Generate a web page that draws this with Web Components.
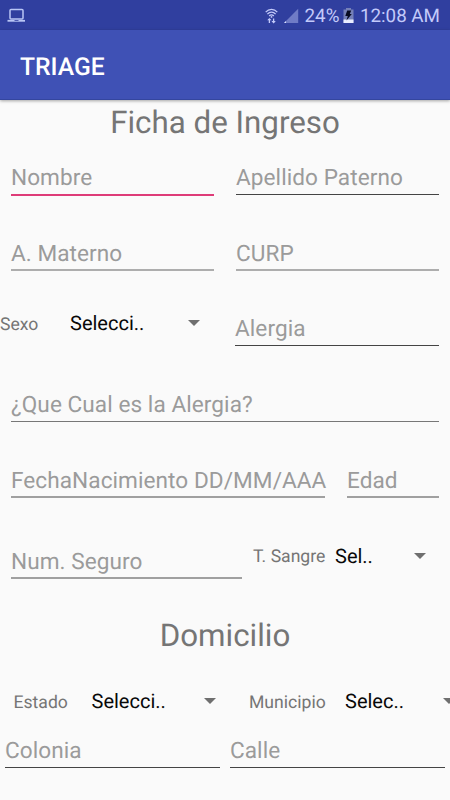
<!DOCTYPE html>
<html lang="es">
<head>
<meta charset="utf-8">
<title>TRIAGE</title>
<style>
html,body{margin:0;padding:0}
body{width:450px;height:800px;overflow:hidden;background:#fafafa;font-family:Roboto,"Noto Sans",sans-serif;text-rendering:geometricPrecision}
</style>
</head>
<body>
<triage-screen></triage-screen>
<script>
const define = (name, html) => {
  const t = document.createElement('template');
  t.innerHTML = html;
  customElements.define(name, class extends HTMLElement {
    constructor() {
      super();
      this.attachShadow({mode: 'open'}).append(t.content.cloneNode(true));
    }
  });
};

define('status-bar', `
<style>
:host{display:flex;align-items:center;height:30px;box-sizing:border-box;padding:1px 10px 0 7px;background:#303f9f;color:#c3cafa;font-size:18.8px;line-height:30px}
svg{display:block;flex:none}
.laptop{margin-right:auto}
.wifi{margin-right:5px}
.signal{margin-right:6px}
.battery{margin:0 5.5px 0 4px}
span{white-space:nowrap}
</style>
<svg class="laptop" width="19" height="15" viewBox="0 0 19 15" fill="none" stroke="#b9c6f5"><rect x="3" y="1.6" width="13" height="9.4" rx="1" stroke-width="1.5"/><path d="M.5 12.8h17.5" stroke-width="1.8"/><path d="M7.5 12.5h4" stroke="#303f9f" stroke-width=".8"/></svg>
<svg class="wifi" width="13" height="16" viewBox="0 0 13 16" fill="none" stroke="#c3cafa"><path d="M.7 4.1C3.8.4 9.2.4 12.3 4.1" stroke-width="1.2"/><path d="M2.4 6.1C4.7 3.5 8.3 3.5 10.6 6.1" stroke-width="1.3"/><path d="M4.2 8C5.6 6.4 7.4 6.4 8.8 8" stroke-width="1.3"/><circle cx="6.5" cy="8.9" r=".9" fill="#c3cafa" stroke="none"/><path d="M4.4 15v-4M8.6 10.5v4" stroke-width="1.3"/><path d="M2.2 12.3l2.2-2.4 2.2 2.4zM6.4 13.1l2.2 2.4 2.2-2.4z" fill="#c3cafa" stroke="none"/></svg>
<svg class="signal" width="16" height="16" viewBox="0 0 16 16"><path d="M15.2 .8V15H1z" fill="#6f7bc6"/><path d="M3 13v2H1z" fill="#dce2ff"/></svg>
<span>24%</span>
<svg class="battery" width="11" height="15" viewBox="0 0 11 15"><path d="M3 0h5v1.6h2.5V15H.5V1.6H3z" fill="#7580b8"/><path d="M.5 11.5h10V15H.5z" fill="#e9edff"/><path d="M4.2 2.5h4L6.8 6h2L3.4 12.5 4.8 8H2.3z" fill="#080b20"/></svg>
<span>12:08 AM</span>`);

define('app-bar', `
<style>
:host{display:flex;align-items:center;height:70px;box-sizing:border-box;padding:5px 20px 0;background:#3f51b5;border-bottom:1px solid #34469f;color:#fff;font-size:24.7px;font-weight:500;box-shadow:0 1px 3px rgba(0,0,0,.35);position:relative}
</style><slot></slot>`);

define('section-title', `
<style>
:host{display:flex;justify-content:center;align-items:flex-start;box-sizing:border-box;color:#757575;font-size:31.3px;line-height:38px;white-space:nowrap}
</style><slot></slot>`);

define('form-row', `
<style>
:host{display:flex;align-items:flex-end;overflow:hidden}
</style><slot></slot>`);

define('text-field', `
<style>
:host{display:block;flex:none;box-sizing:border-box;color:#9b9b9b;font-size:22.6px;letter-spacing:.06px;line-height:26px;white-space:nowrap;border-bottom:1px solid var(--line,#444)}
div{padding-bottom:var(--gap,3px)}
</style><div><slot></slot></div>`);

define('field-label', `
<style>
:host{display:block;flex:none;color:#757575;font-size:17.6px;line-height:24px;white-space:nowrap}
</style><slot></slot>`);

define('drop-down', `
<style>
:host{display:flex;flex:none;align-items:center;justify-content:space-between;color:#080808;font-size:20px;line-height:24px;white-space:nowrap}
svg{display:block;flex:none}
</style><span><slot></slot></span>
<svg width="12" height="6" viewBox="0 0 12 6"><path d="M0 0h12L6 6z" fill="#6f6f6f"/></svg>`);

define('triage-screen', `
<style>
:host{display:block;width:450px;height:800px;overflow:hidden;background:#fafafa}
.focus{border-bottom:2px solid #de3c78}
.soft{border-bottom:2px solid #adadad;--gap:2px}
.mid{--line:#777}
.low{border-bottom:2px solid #a0a0a0;--gap:2px}
</style>
<status-bar></status-bar>
<app-bar>TRIAGE</app-bar>
<section-title style="height:45px;padding-top:4px">Ficha de Ingreso</section-title>
<form-row style="height:51px">
  <text-field class="focus" style="width:203px;margin-left:11px">Nombre</text-field>
  <text-field style="width:203px;margin:0 0 1px 22px">Apellido Paterno</text-field>
</form-row>
<form-row style="height:75px">
  <text-field class="soft" style="width:203px;margin-left:11px">A. Materno</text-field>
  <text-field class="soft" style="width:203px;margin-left:22px">CURP</text-field>
</form-row>
<form-row style="height:75px">
  <field-label style="width:70px;margin-bottom:9px">Sexo</field-label>
  <drop-down style="width:130px;margin-bottom:11px">Selecci..</drop-down>
  <text-field style="width:204px;margin-left:35px">Alergia</text-field>
</form-row>
<form-row style="height:76px">
  <text-field class="mid" style="width:428px;margin-left:11px">¿Que Cual es la Alergia?</text-field>
</form-row>
<form-row style="height:76px">
  <text-field class="low" style="width:314px;margin-left:11px">FechaNacimiento DD/MM/AAA</text-field>
  <text-field class="low" style="width:92px;margin-left:22px">Edad</text-field>
</form-row>
<form-row style="height:81px">
  <text-field class="low" style="width:231px;margin-left:11px">Num. Seguro</text-field>
  <field-label style="width:82px;margin:0 0 10px 11px">T. Sangre</field-label>
  <drop-down style="width:91px;margin-bottom:11px">Sel..</drop-down>
</form-row>
<section-title style="height:80px;padding-top:38px">Domicilio</section-title>
<form-row style="height:60px">
  <field-label style="width:78px;margin:0 0 4px 13.5px">Estado</field-label>
  <drop-down style="width:124.5px;margin-bottom:6px">Selecci..</drop-down>
  <field-label style="width:96px;margin:0 0 4px 33px">Municipio</field-label>
  <drop-down style="width:110px;margin-bottom:6px">Selec..</drop-down>
</form-row>
<form-row style="height:49px">
  <text-field style="width:215px;margin-left:5px">Colonia</text-field>
  <text-field style="width:215px;margin-left:10px">Calle</text-field>
</form-row>`);
</script>
</body>
</html>
